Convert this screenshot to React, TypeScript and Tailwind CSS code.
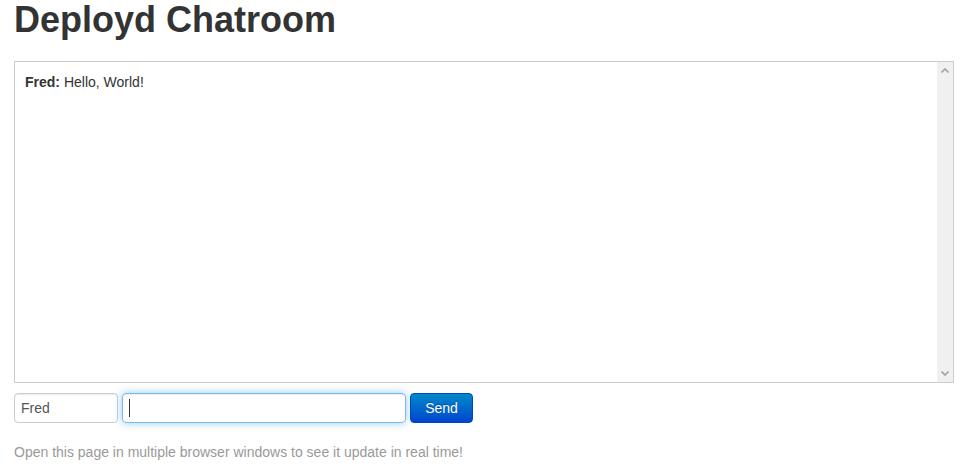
import React from 'react'

const FONT = { fontFamily: '"Liberation Sans", Arial, sans-serif' }

export default function App() {
  return (
    <div className="min-h-[469px] bg-white px-[14px] text-[14px] leading-[20px] text-[#333]" style={FONT}>
      {/* Title */}
      <h1 className="mb-[21px] text-[36px] leading-[40px] font-bold text-[#333]">Deployd Chatroom</h1>

      {/* Messages box */}
      <div className="flex h-[322px] w-[940px] border border-[#ccc]">
        <div className="flex-1 p-[10px]">
          <div>
            <strong>Fred:</strong> Hello, World!
          </div>
        </div>
        {/* Scrollbar */}
        <div className="flex w-[16px] flex-col items-center justify-between bg-[#f0f0f0] py-[6px]">
          <svg width="8" height="5" viewBox="0 0 8 5">
            <path d="M0.5 4.5 L4 1 L7.5 4.5" fill="none" stroke="#a3a3a3" strokeWidth="1.6" />
          </svg>
          <svg width="8" height="5" viewBox="0 0 8 5">
            <path d="M0.5 0.5 L4 4 L7.5 0.5" fill="none" stroke="#a3a3a3" strokeWidth="1.6" />
          </svg>
        </div>
      </div>

      {/* Form */}
      <div className="mt-[10px] flex items-center gap-[4px]">
        <input
          defaultValue="Fred"
          className="h-[30px] w-[104px] rounded-[4px] border border-[#ccc] px-[6px] text-[14px] text-[#555] shadow-[inset_0_1px_1px_rgba(0,0,0,0.075)] outline-none"
          style={FONT}
        />
        <div className="flex h-[30px] w-[284px] items-center rounded-[4px] border border-[rgba(82,168,236,0.8)] px-[6px] shadow-[inset_0_1px_1px_rgba(0,0,0,0.075),0_0_8px_rgba(82,168,236,0.6)]">
          <span className="h-[18px] w-px bg-[#333]" />
        </div>
        <button
          className="h-[30px] w-[63px] rounded-[4px] border border-[#0044cc] bg-gradient-to-b from-[#0088cc] to-[#0044cc] text-[14px] text-white [text-shadow:0_-1px_0_rgba(0,0,0,0.25)]"
          style={FONT}
        >
          Send
        </button>
      </div>

      {/* Footer */}
      <p className="mt-[19px] text-[#999]">Open this page in multiple browser windows to see it update in real time!</p>
    </div>
  )
}
